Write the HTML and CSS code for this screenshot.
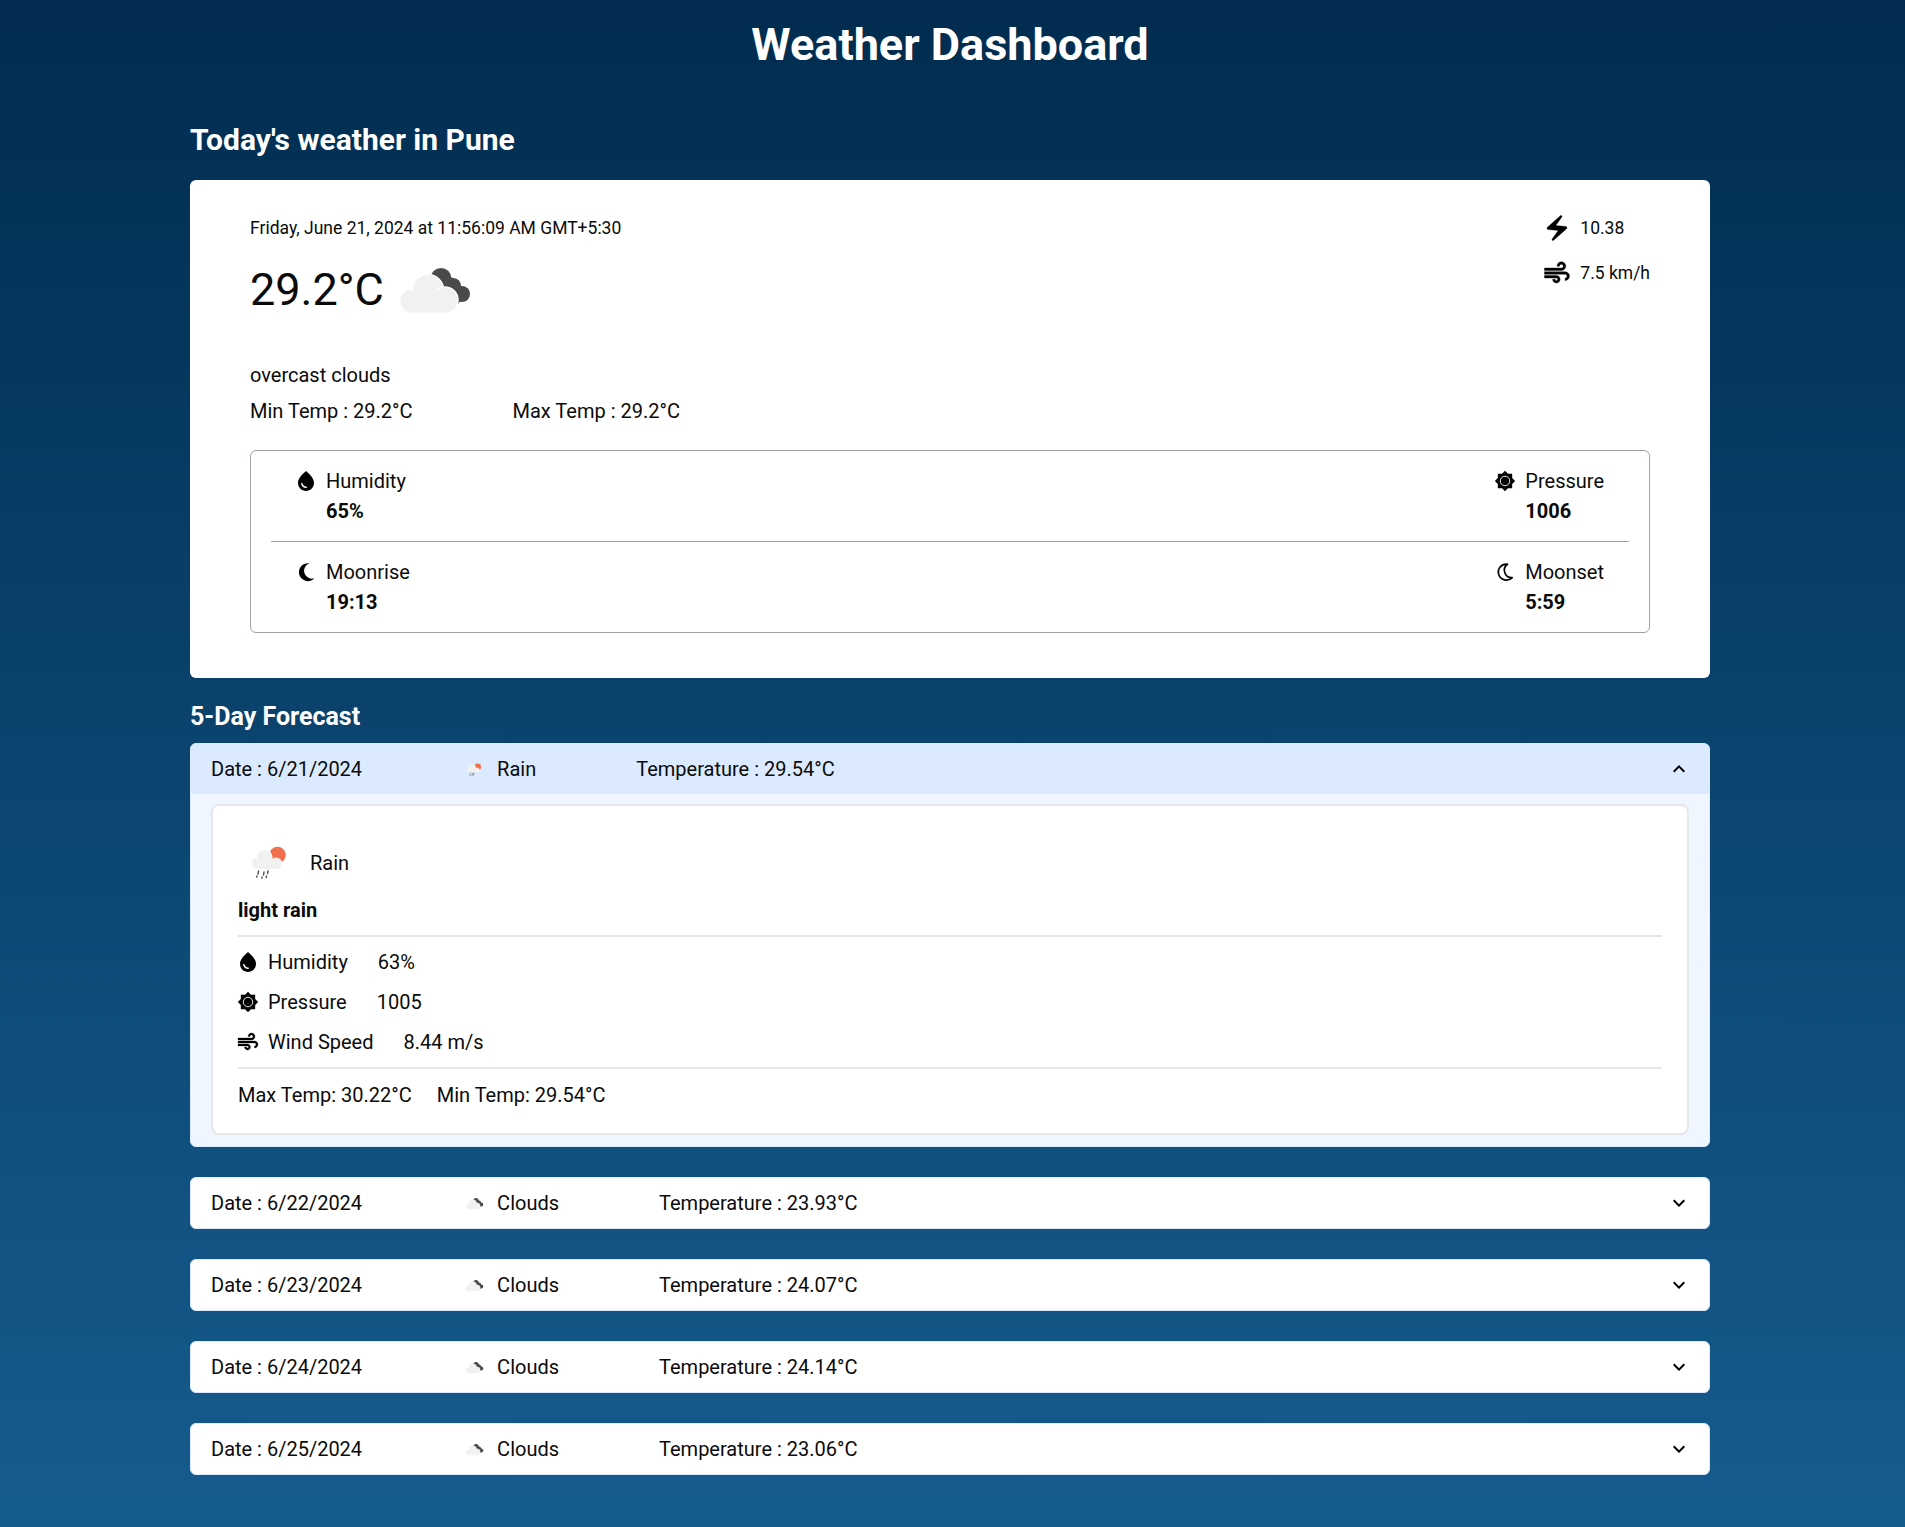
FILE: index.html
```html
<!DOCTYPE html>
<html lang="en">
<head>
  <meta charset="UTF-8">
  <meta name="viewport" content="width=device-width, initial-scale=1.0">
  <title>Weather Dashboard</title>
  <link rel="stylesheet" href="styles.css">
</head>
<body>
  <svg class="sprites" width="0" height="0">
    <defs>
      <symbol id="bolt" viewBox="0 0 24 24"><path stroke="#000" stroke-width=".3" d="M14.69 2.21 4.33 11.49c-.64.58-.28 1.65.58 1.73L13 14l-4.85 6.76c-.22.31-.19.74.08 1.01.3.3.77.31 1.08.02l10.36-9.28c.64-.58.28-1.65-.58-1.73L11 10l4.85-6.76c.22-.31.19-.74-.08-1.01-.3-.3-.77-.31-1.08-.02z"/></symbol>
      <symbol id="air" viewBox="0 0 24 24"><path stroke="#000" stroke-width=".3" d="M14.5 17c0 1.65-1.35 3-3 3s-3-1.35-3-3h2c0 .55.45 1 1 1s1-.45 1-1-.45-1-1-1H2v-2h9.5c1.65 0 3 1.35 3 3zM19 6.5C19 4.57 17.43 3 15.5 3S12 4.57 12 6.5h2c0-.83.67-1.5 1.5-1.5s1.5.67 1.5 1.5S16.33 8 15.5 8H2v2h13.5c1.93 0 3.5-1.57 3.5-3.5zm-.5 4.5H2v2h16.5c.83 0 1.5.67 1.5 1.5s-.67 1.5-1.5 1.5v2c1.93 0 3.5-1.57 3.5-3.5S20.43 11 18.5 11z"/></symbol>
      <symbol id="drop" viewBox="0 0 24 24"><path d="M12 2c-5.33 4.55-8 8.48-8 11.8 0 4.98 3.8 8.2 8 8.2s8-3.22 8-8.2c0-3.32-2.67-7.25-8-11.8zM7.83 14c.37 0 .67.26.74.62.41 2.22 2.28 2.98 3.64 2.87.43-.02.79.32.79.75 0 .4-.32.73-.72.75-2.13.13-4.62-1.09-5.19-4.12-.08-.45.28-.87.74-.87z"/></symbol>
      <symbol id="gauge" viewBox="-1.4 -1.4 26.8 26.8">
        <path d="M20 8.69V4h-4.69L12 .69 8.69 4H4v4.69L.69 12 4 15.31V20h4.69L12 23.31 15.31 20H20v-4.69L23.31 12 20 8.69z"/>
        <circle cx="12" cy="12" r="5.3" fill="none" stroke="#fff" stroke-width="1"/>
      </symbol>
      <symbol id="moon" viewBox="0 0 24 24"><path d="M15.5 3.3A9 9 0 1 0 20.5 18.3 7.6 7.6 0 0 1 15.5 3.3z"/></symbol>
      <symbol id="moon-line" viewBox="0 0 24 24"><path fill="none" stroke="#000" stroke-width="1.7" stroke-linejoin="round" d="M14.5 4.2A8 8 0 1 0 19.2 17.6 7.4 7.4 0 0 1 14.5 4.2z"/></symbol>
      <symbol id="down" viewBox="0 0 24 24"><path d="M16.59 8.59 12 13.17 7.41 8.59 6 10l6 6 6-6z"/></symbol>
      <symbol id="up" viewBox="0 0 24 24"><path d="m12 8-6 6 1.41 1.41L12 10.83l4.59 4.58L18 14z"/></symbol>
      <symbol id="clouds" viewBox="0 0 100 100">
        <g fill="#4a4a4a">
          <circle cx="56" cy="38.5" r="10.5"/><circle cx="68" cy="46" r="8"/><circle cx="77" cy="54" r="8"/><path d="M47 42 57 29 83 52 73 64z"/>
        </g>
        <g fill="#f1f1f1" stroke="#fff" stroke-width="2.5" paint-order="stroke">
          <circle cx="27" cy="61" r="11.5"/><circle cx="43" cy="50" r="15"/><circle cx="60" cy="60" r="12.5"/><path d="M27 51H60V72.5H27z" stroke="none"/>
        </g>
      </symbol>
      <symbol id="rain" viewBox="0 0 64 64">
        <circle cx="40.5" cy="25" r="8.3" fill="#f0704d"/>
        <g fill="#f1f1f1" stroke="#fff" stroke-width="1.2" paint-order="stroke">
          <circle cx="20" cy="33" r="5.3"/><circle cx="27.5" cy="27.5" r="7.5"/><circle cx="39" cy="33.5" r="5.5"/><path d="M20 30H39V39H20z" stroke="none"/>
        </g>
        <g stroke="#555" stroke-width="1.5" stroke-linecap="round">
          <path d="M21.5 41 21 44M20 46 19.7 47M27 42 26.5 45M25 47 24.8 48M31 41 30.5 43.5M29.5 46 29.2 47.5"/>
        </g>
      </symbol>
    </defs>
  </svg>

  <h1 class="title">Weather Dashboard</h1>

  <main class="page">
    <h2 class="today-title">Today's weather in Pune</h2>

    <section class="today">
      <div class="today-top">
        <div>
          <p class="today-date">Friday, June 21, 2024 at 11:56:09 AM GMT+5:30</p>
          <div class="today-temp">
            <span>29.2°C</span>
            <svg class="icon-100"><use href="#clouds"/></svg>
          </div>
        </div>
        <div class="today-side">
          <div class="side-item"><svg class="icon-30"><use href="#bolt"/></svg><span>10.38</span></div>
          <div class="side-item"><svg class="icon-30"><use href="#air"/></svg><span>7.5 km/h</span></div>
        </div>
      </div>

      <p class="today-desc">overcast clouds</p>
      <div class="today-minmax">
        <span>Min Temp : 29.2°C</span>
        <span>Max Temp : 29.2°C</span>
      </div>

      <div class="stats">
        <div class="stats-row">
          <div class="stat">
            <svg class="icon-24"><use href="#drop"/></svg>
            <div><p>Humidity</p><p class="stat-value">65%</p></div>
          </div>
          <div class="stat">
            <svg class="icon-24"><use href="#gauge"/></svg>
            <div><p>Pressure</p><p class="stat-value">1006</p></div>
          </div>
        </div>
        <div class="stats-row stats-row-last">
          <div class="stat">
            <svg class="icon-24"><use href="#moon"/></svg>
            <div><p>Moonrise</p><p class="stat-value">19:13</p></div>
          </div>
          <div class="stat">
            <svg class="icon-24"><use href="#moon-line"/></svg>
            <div><p>Moonset</p><p class="stat-value">5:59</p></div>
          </div>
        </div>
      </div>
    </section>

    <h2 class="forecast-title">5-Day Forecast</h2>

    <section class="accordion open">
      <div class="accordion-head">
        <span>Date : 6/21/2024</span>
        <div class="head-weather"><svg class="icon-25"><use href="#rain"/></svg><span>Rain</span></div>
        <span>Temperature : 29.54°C</span>
        <svg class="icon-24 chevron"><use href="#up"/></svg>
      </div>
      <div class="accordion-body">
        <div class="detail">
          <div class="detail-weather">
            <svg class="icon-64"><use href="#rain"/></svg>
            <span>Rain</span>
          </div>
          <p class="detail-desc">light rain</p>
          <div class="detail-rows">
            <div class="detail-row"><svg class="icon-24"><use href="#drop"/></svg><span>Humidity</span><span>63%</span></div>
            <div class="detail-row"><svg class="icon-24"><use href="#gauge"/></svg><span>Pressure</span><span>1005</span></div>
            <div class="detail-row"><svg class="icon-24"><use href="#air"/></svg><span>Wind Speed</span><span>8.44 m/s</span></div>
          </div>
          <div class="detail-temps">
            <span>Max Temp: 30.22°C</span>
            <span>Min Temp: 29.54°C</span>
          </div>
        </div>
      </div>
    </section>

    <section class="accordion">
      <div class="accordion-head">
        <span>Date : 6/22/2024</span>
        <div class="head-weather"><svg class="icon-25"><use href="#clouds"/></svg><span>Clouds</span></div>
        <span>Temperature : 23.93°C</span>
        <svg class="icon-24 chevron"><use href="#down"/></svg>
      </div>
    </section>

    <section class="accordion">
      <div class="accordion-head">
        <span>Date : 6/23/2024</span>
        <div class="head-weather"><svg class="icon-25"><use href="#clouds"/></svg><span>Clouds</span></div>
        <span>Temperature : 24.07°C</span>
        <svg class="icon-24 chevron"><use href="#down"/></svg>
      </div>
    </section>

    <section class="accordion">
      <div class="accordion-head">
        <span>Date : 6/24/2024</span>
        <div class="head-weather"><svg class="icon-25"><use href="#clouds"/></svg><span>Clouds</span></div>
        <span>Temperature : 24.14°C</span>
        <svg class="icon-24 chevron"><use href="#down"/></svg>
      </div>
    </section>

    <section class="accordion">
      <div class="accordion-head">
        <span>Date : 6/25/2024</span>
        <div class="head-weather"><svg class="icon-25"><use href="#clouds"/></svg><span>Clouds</span></div>
        <span>Temperature : 23.06°C</span>
        <svg class="icon-24 chevron"><use href="#down"/></svg>
      </div>
    </section>
  </main>
</body>
</html>
```

FILE: styles.css
```css
* {
  box-sizing: border-box;
}
body {
  margin: 0;
  height: 1527px;
  padding-right: 5px;
  font-family: Roboto, "Liberation Sans", sans-serif;
  font-size: 20px;
  line-height: 24px;
  color: #0b0b0b;
  background: linear-gradient(to bottom, #012c4f 0%, #155c8e 100%);
}
p {
  margin: 0;
}
.sprites {
  position: absolute;
}
svg {
  flex: none;
  display: block;
}
.icon-24 { width: 24px; height: 24px; }
.icon-25 { width: 25px; height: 25px; }
.icon-30 { width: 30px; height: 30px; }
.icon-64 { width: 64px; height: 64px; }
.icon-100 { width: 100px; height: 100px; }

.title {
  margin: 0;
  padding-top: 16px;
  height: 90px;
  font-size: 45px;
  line-height: 58px;
  font-weight: 700;
  text-align: center;
  color: #fff;
}
.page {
  width: 1520px;
  margin: 0 auto;
}
.today-title {
  margin: 0;
  height: 90px;
  padding-top: 30px;
  font-size: 30px;
  line-height: 40px;
  font-weight: 700;
  color: #fff;
}
.today {
  height: 498px;
  padding: 36px 60px 0;
  background: #fff;
  border-radius: 6px;
}
.today-top {
  display: flex;
  justify-content: space-between;
}
.today-date {
  font-size: 17.5px;
}
.today-temp {
  display: flex;
  align-items: center;
  height: 100px;
  font-size: 45px;
}
.today-temp svg {
  margin-left: 1px;
}
.today-side {
  display: flex;
  flex-direction: column;
  gap: 15px;
  margin-top: -3px;
  font-size: 17.5px;
}
.side-item {
  display: flex;
  align-items: center;
  gap: 8px;
}
.today-desc {
  margin-top: 23px;
}
.today-minmax {
  display: flex;
  gap: 100px;
  margin-top: 12px;
}
.stats {
  margin-top: 27px;
  height: 183px;
  padding: 0 20px;
  border: 1px solid #9ca3af;
  border-radius: 6px;
}
.stats-row {
  display: flex;
  justify-content: space-between;
  height: 91px;
  padding: 18px 25px 0 23px;
  border-bottom: 1px solid #9ca3af;
}
.stats-row-last {
  border-bottom: none;
  padding-top: 18px;
}
.stat {
  display: flex;
  gap: 8px;
}
.stat-value {
  margin-top: 6px;
  font-weight: 700;
}

.forecast-title {
  margin: 0;
  height: 65px;
  padding-top: 23px;
  font-size: 25px;
  line-height: 32px;
  font-weight: 700;
  color: #fff;
}
.accordion {
  margin-bottom: 30px;
  border: 1px solid #dbeafe;
  border-radius: 6px;
  background: #fff;
  overflow: hidden;
}
.accordion-head {
  display: flex;
  align-items: center;
  gap: 100px;
  height: 50px;
  padding: 0 18px 0 20px;
}
.head-weather {
  display: flex;
  align-items: center;
  gap: 10px;
}
.chevron {
  margin-left: auto;
}
.open {
  background: #eff6ff;
}
.open .accordion-head {
  background: #dbeafe;
}
.accordion-body {
  padding: 10px 20px 11px;
}
.detail {
  padding: 24px 25px;
  background: #fff;
  border: 2px solid #e5e7eb;
  border-radius: 8px;
}
.detail-weather {
  display: flex;
  align-items: center;
  gap: 9px;
}
.detail-weather svg {
  margin-left: -1px;
}
.detail-weather span {
  margin-top: 2px;
}
.detail-desc {
  margin-top: 4px;
  padding-bottom: 13px;
  font-weight: 700;
  border-bottom: 2px solid #e5e7eb;
}
.detail-rows {
  display: flex;
  flex-direction: column;
  gap: 16px;
  padding: 13px 0;
  border-bottom: 2px solid #e5e7eb;
}
.detail-row {
  display: flex;
  align-items: center;
  gap: 8px;
}
.detail-row svg {
  margin-left: -2px;
}
.detail-row span:last-child {
  margin-left: 22px;
}
.detail-temps {
  display: flex;
  gap: 25px;
  margin-top: 14px;
  padding-bottom: 2px;
}
```
